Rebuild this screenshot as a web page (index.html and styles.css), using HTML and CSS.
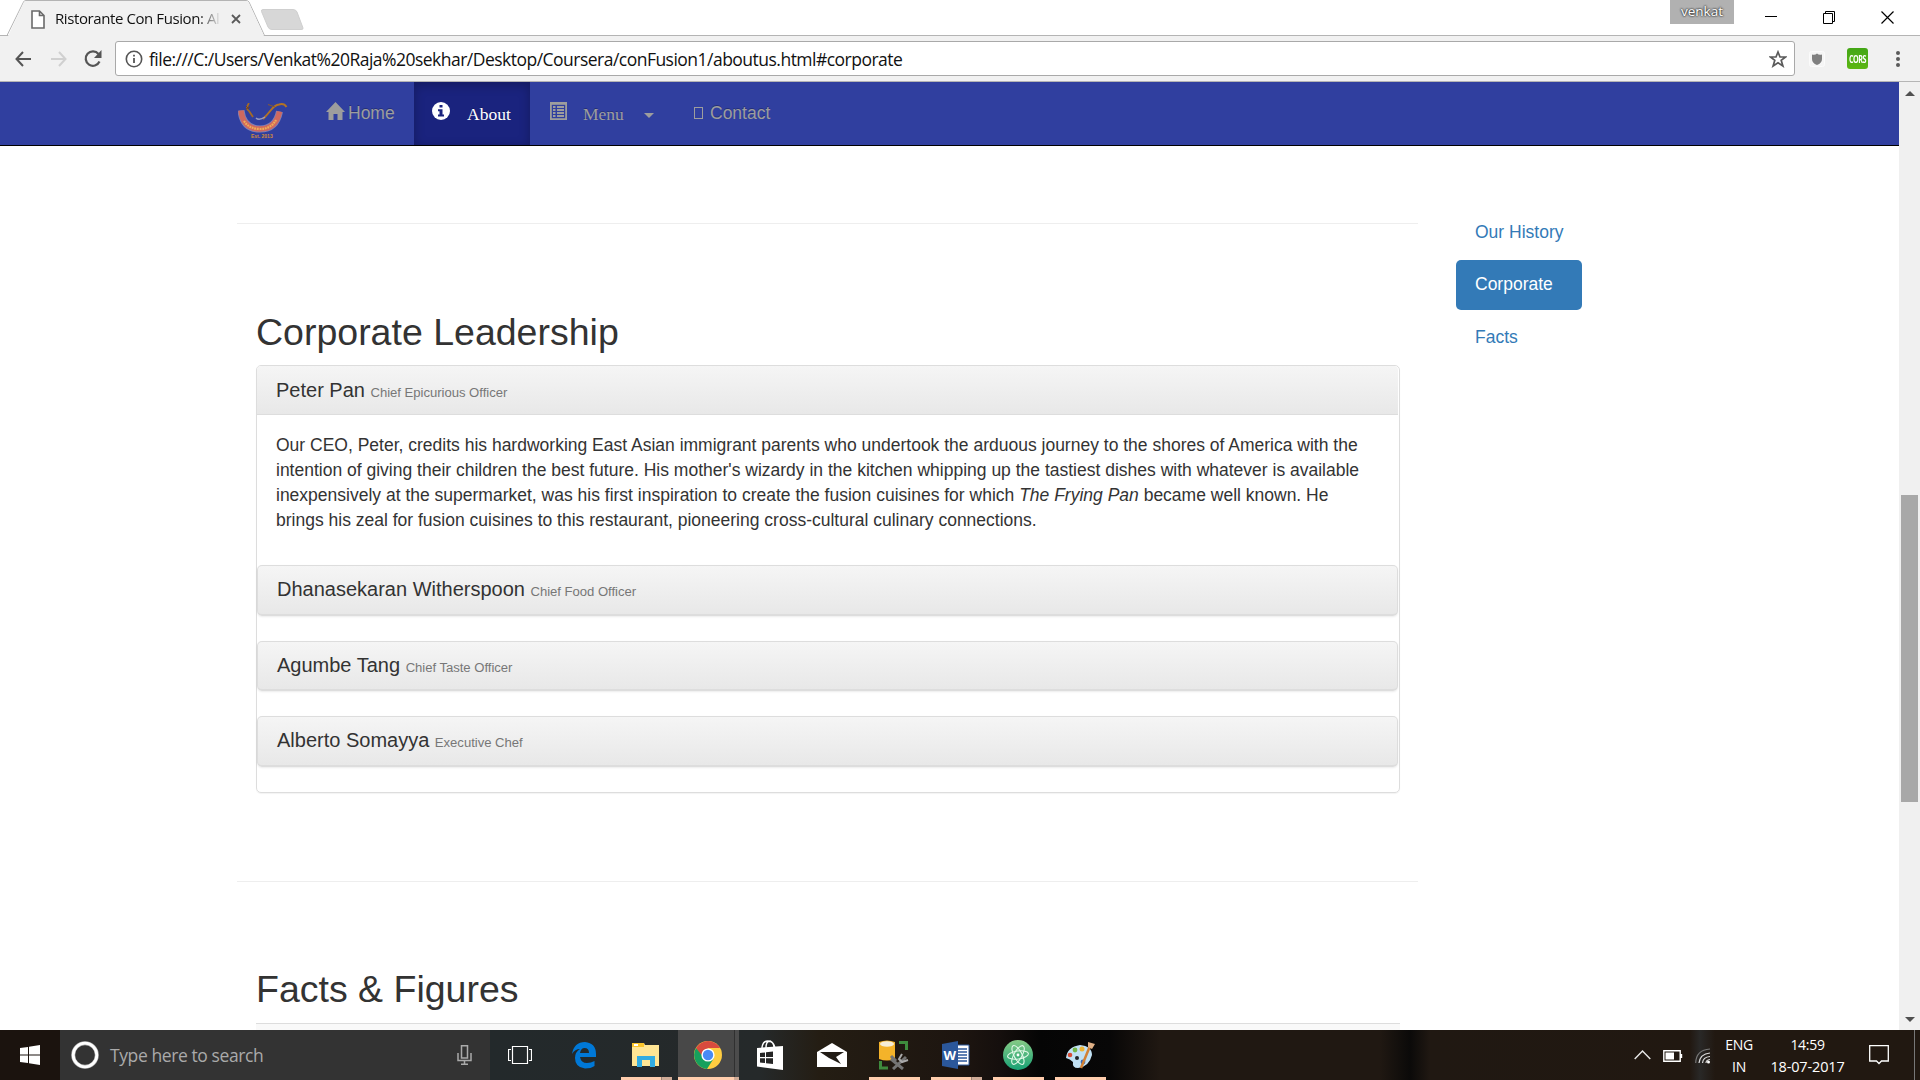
FILE: index.html
```html
<!DOCTYPE html>
<html lang="en">
<head>
<meta charset="utf-8">
<title>Ristorante Con Fusion: About Us</title>
<link rel="stylesheet" href="styles.css">
</head>
<body>
<div class="screen">
  <header class="tabstrip">
    <svg class="tab-shape" width="320" height="36" viewBox="0 0 320 36">
      <path d="M0 35.5H7L23.500 2Q24 .5 26 .5H246Q248 .5 249 2L264.500 35.500H320" fill="none" stroke="#b4b4b4"/>
      <path d="M8 36L24 2Q25 1 26 1H246Q248 1 248.500 2L264 36Z" fill="#f1f1f1"/>
      <path d="M263 9.500H293Q296 9.500 297 12L303 28Q303.500 29.500 301 29.500H272Q269 29.500 268 27L261.500 11.500Q261 9.500 263 9.500Z" fill="#d7d7d7" stroke="#cfcfcf"/>
    </svg>
    <div class="tab">
      <svg width="14" height="19" viewBox="0 0 14 19"><path d="M1 1H8.500L13 5.500V18H1ZM8.500 1V5.500H13" fill="#fff" stroke="#6a6a6a" stroke-width="1.600"/></svg>
      <span class="tab-title">Ristorante Con Fusion: Al</span>
      <svg width="10" height="10" viewBox="0 0 10 10"><path d="M1 1L9 9M9 1L1 9" stroke="#5a5a5a" stroke-width="1.800"/></svg>
    </div>
    <div class="window-tools">
      <span class="profile">venkat</span>
      <svg width="12" height="14" viewBox="0 0 12 14"><path d="M0 6.500H12" stroke="#000"/></svg>
      <svg class="restore" width="13" height="13" viewBox="0 0 13 13"><path d="M.5 2.500H9.500V12.500H.5ZM2.500 2.500V.5H11.500V10.500H9.500" fill="none" stroke="#000"/></svg>
      <svg class="close" width="13" height="13" viewBox="0 0 13 13"><path d="M.5 .5L12.500 12.500M12.500 .5L.5 12.500" stroke="#000" stroke-width="1.200"/></svg>
    </div>
  </header>

  <div class="toolbar">
    <svg class="nav-arrow" width="17" height="16" viewBox="0 0 17 16"><path d="M16 8H2M8 1L1.500 8L8 15" fill="none" stroke="#555" stroke-width="2"/></svg>
    <svg class="nav-arrow forward" width="17" height="16" viewBox="0 0 17 16"><path d="M1 8H15M9 1L15.500 8L9 15" fill="none" stroke="#d0d0d0" stroke-width="2"/></svg>
    <svg class="reload" width="18" height="18" viewBox="0 0 18 18"><path d="M15.500 11.500A7.200 7.200 0 1 1 14.500 4" fill="none" stroke="#555" stroke-width="2.200"/><path d="M17.500 0V8H10Z" fill="#555"/></svg>
    <div class="address">
      <svg width="18" height="18" viewBox="0 0 18 18"><circle cx="9" cy="9" r="7.700" fill="none" stroke="#555" stroke-width="1.600"/><path d="M9 8V13M9 4.800V6.600" stroke="#555" stroke-width="1.800"/></svg>
      <span class="url">file:///C:/Users/Venkat%20Raja%20sekhar/Desktop/Coursera/conFusion1/aboutus.html#corporate</span>
      <svg width="18" height="18" viewBox="0 0 18 18"><path d="M9 2L11 7H16.500L12.200 10.300L13.900 16L9 12.700L4.100 16L5.800 10.300L1.500 7H7Z" fill="none" stroke="#5a5a5a" stroke-width="1.700"/></svg>
    </div>
    <svg class="shield" width="16" height="16" viewBox="0 0 16 16"><rect x=".5" y=".5" width="15" height="15" rx="2" fill="#f5f5f5" stroke="#fbfbfb"/><path d="M3 3.500Q6 4.500 8 2.500Q10 4.500 13 3.500V8Q13 12 8 14Q3 12 3 8Z" fill="#808080"/></svg>
    <span class="cors"><span>CORS</span></span>
    <svg class="dots" width="4" height="18" viewBox="0 0 4 18"><circle cx="2" cy="3" r="2" fill="#5a5a5a"/><circle cx="2" cy="9" r="2" fill="#5a5a5a"/><circle cx="2" cy="15" r="2" fill="#5a5a5a"/></svg>
  </div>

  <div class="viewport">
    <div class="page">
      <nav class="navbar">
        <svg class="brand" width="50" height="37" viewBox="0 0 50 37">
          <path d="M3 7.500Q5 26 22 26Q38 26 41.500 8.500" fill="none" stroke="#7d80b8" stroke-width="7"/>
          <path d="M3 7.500Q5 26 22 26Q38 26 41.500 8.500" fill="none" stroke="#cf695f" stroke-width="5.400"/>
          <path d="M6 18Q11 26 22 26T38 17" fill="none" stroke="#f0ae55" stroke-width="2.200" stroke-dasharray="1.800 .8"/>
          <path d="M11 0Q7 6 11 8L15 14" fill="none" stroke="#a56a24" stroke-width="1.800"/>
          <path d="M8 6L12 4M8 3L11 6" stroke="#704329"/>
          <path d="M25 16Q29 12 33 7T41 1.500Q46 0 48.500 4" fill="none" stroke="#b37324" stroke-width="2"/>
          <path d="M30 1.500L37 4" stroke="#8c5a2b"/>
          <path d="M18 15Q21 18 27 14" fill="none" stroke="#999ac0" stroke-width="1.500"/>
          <text x="13" y="34.500" class="brand-date">Est. 2013</text>
        </svg>
        <a class="nav-link home"><svg width="19" height="18" viewBox="0 0 19 18"><path d="M9.500 0L19 10H16.500V18H11.500V12H7.500V18H2.500V10H0Z" fill="#9d9d9d"/></svg><span>Home</span></a>
        <a class="nav-link about"><svg width="18" height="18" viewBox="0 0 18 18"><circle cx="9" cy="9" r="9" fill="#fff"/><path d="M7.500 3H10.500V5.500H7.500ZM6 7.200H10.500V12.500H12V14.500H6V12.500H7.500V9.200H6Z" fill="#1a237e"/></svg><span>About</span></a>
        <a class="nav-link menu"><svg width="17" height="18" viewBox="0 0 17 18"><path d="M0 0H17V18H0Z" fill="#9d9d9d"/><path d="M1.800 2.800H15.200V16.200H1.800Z" fill="#303f9f"/><path d="M3 5H5.500M7 5H14M3 8H5.500M7 8H14M3 11H5.500M7 11H14M3 14H5.500M7 14H14" stroke="#9d9d9d" stroke-width="1.900"/></svg><span>Menu</span><i class="caret"></i></a>
        <a class="nav-link contact"><i class="missing-glyph"></i><span>Contact</span></a>
      </nav>
      <div class="content">
        <main>
          <section class="leadership">
            <h2>Corporate Leadership</h2>
            <div class="panel-group">
              <div class="panel-heading first">Peter Pan <small>Chief Epicurious Officer</small></div>
              <p>Our CEO, Peter, credits his hardworking East Asian immigrant parents who undertook the arduous journey to the shores of America with the<br>intention of giving their children the best future. His mother's wizardy in the kitchen whipping up the tastiest dishes with whatever is available<br>inexpensively at the supermarket, was his first inspiration to create the fusion cuisines for which <em>The Frying Pan</em> became well known. He<br>brings his zeal for fusion cuisines to this restaurant, pioneering cross-cultural culinary connections.</p>
              <div class="panel-heading nested">Dhanasekaran Witherspoon <small>Chief Food Officer</small></div>
              <div class="panel-heading nested">Agumbe Tang <small>Chief Taste Officer</small></div>
              <div class="panel-heading nested">Alberto Somayya <small>Executive Chef</small></div>
            </div>
          </section>
          <section class="facts">
            <h2>Facts &amp; Figures</h2>
            <div class="facts-box"></div>
          </section>
        </main>
        <aside>
          <a>Our History</a>
          <a class="active">Corporate</a>
          <a>Facts</a>
        </aside>
      </div>
    </div>
    <div class="scrollbar">
      <svg width="10" height="5" viewBox="0 0 10 5"><path d="M0 5L5 0L10 5Z" fill="#505050"/></svg>
      <div class="thumb"></div>
      <svg width="10" height="5" viewBox="0 0 10 5"><path d="M0 0L5 5L10 0Z" fill="#505050"/></svg>
    </div>
  </div>

  <footer class="taskbar">
    <div class="start"><svg width="20" height="20" viewBox="0 0 20 20"><path d="M0 3L8 2V9.500H0ZM9 1.800L20 0V9.500H9ZM0 10.500H8V18L0 17ZM9 10.500H20V20L9 18.200Z" fill="#fff"/></svg></div>
    <div class="search">
      <svg width="28" height="28" viewBox="0 0 28 28"><circle cx="14" cy="14" r="11.800" fill="none" stroke="#aaa" stroke-width="4"/><circle cx="14" cy="14" r="11.800" fill="none" stroke="#fff" stroke-width="2.800"/></svg>
      <span>Type here to search</span>
      <svg width="15" height="20" viewBox="0 0 15 20"><path d="M4.500 .8H10.500V13H4.500ZM1 8V15.500H14V8M7.500 15.500V19M4 19.200H11" fill="none" stroke="#aaa" stroke-width="1.500"/></svg>
    </div>
    <div class="taskview"><svg width="24" height="18" viewBox="0 0 24 18"><path d="M4.500 .5H19.500V17.500H4.500ZM3 3.500H.5V14.500H3M21 3.500H23.500V14.500H21" fill="none" stroke="#fff" stroke-width="1.200"/></svg></div>
    <div class="apps">
      <div class="app"><svg width="26" height="28" viewBox="0 0 26 28"><path d="M1 13Q3 1 14 1Q25 2 25 13V16H9Q10 22 16 22Q20 22 23.500 20V25Q20 27.500 14 27.500Q4 26.500 4 17Q4 11 9 8Q4 8 1 13ZM9 12H18Q18 7 13.500 7Q10 7 9 12Z" fill="#0078d7" fill-rule="evenodd"/></svg></div>
      <div class="app open grouped"><svg width="28" height="26" viewBox="0 0 28 26"><path d="M0 1H12L13 3H27V24H0Z" fill="#ffe594"/><path d="M0 1H12V5H0Z" fill="#fbc52c"/><path d="M2 2H6V4H2Z" fill="#fff"/><path d="M5 14H23V25H18V18H10V25H5Z" fill="#32ace2"/></svg></div>
      <div class="app open current"><svg width="28" height="28" viewBox="0 0 28 28"><circle cx="14" cy="14" r="14" fill="#ffcd41"/><path d="M2 7A14 14 0 0 1 26.200 7H14L8 17Z" fill="#d84b3e"/><path d="M2 7A14 14 0 0 0 13 28L20 17H10Z" fill="#16a05d"/><circle cx="14" cy="14" r="6.600" fill="#fff"/><circle cx="14" cy="14" r="5.200" fill="#4a8af4"/></svg></div>
      <div class="app"><svg width="26" height="30" viewBox="0 0 26 30"><path d="M0 8L26 6V30L0 26.500Z" fill="#fff"/><path d="M5 9Q5 1 11 1Q17 1 17 8M9 8Q9 1 13 1Q17 3 18 8" fill="none" stroke="#fff" stroke-width="1.400"/><path d="M3 13L8 12.500V17H3ZM9 12.300L16 11.500V17H9ZM3 18.200H8V23L3 22.500ZM9 18.200H16V24L9 23.200Z" fill="#252525"/></svg></div>
      <div class="app"><svg width="30" height="24" viewBox="0 0 30 24"><path d="M0 9L15 0L30 9V24H0Z" fill="#fff"/><path d="M3 9H27L19 14L24 21L12 15Z" fill="#211b15"/></svg></div>
      <div class="app open"><svg width="30" height="30" viewBox="0 0 30 30"><path d="M0 2Q8-1 16 2V19Q8 22 0 19Z" fill="#f4b32a"/><ellipse cx="8" cy="4" rx="7" ry="2.800" fill="#f6edd7"/><path d="M20 2.500H27.500V10M1.500 21V28H9" fill="none" stroke="#3e8b3d" stroke-width="3"/><path d="M12 19L24 29M27 17L14 29M12 16L17 21" stroke="#747474" stroke-width="3"/><path d="M23 14L20 19L23 22L29 20" fill="none" stroke="#aaa" stroke-width="2"/></svg></div>
      <div class="app open grouped"><svg width="28" height="28" viewBox="0 0 28 28"><path d="M14 4H27V24H14Z" fill="#fff" stroke="#2b579a"/><path d="M16 8H25M16 11H25M16 14H25M16 17H25M16 20H25" stroke="#2b579a" stroke-width="1.300"/><path d="M0 3L16 0V28L0 25Z" fill="#2b579a"/><text x="1.500" y="19" class="word-mark">W</text></svg></div>
      <div class="app open"><svg width="30" height="30" viewBox="0 0 30 30"><defs><linearGradient id="atom" x2="0" y2="1"><stop stop-color="#87cb86"/><stop offset="1" stop-color="#17a174"/></linearGradient></defs><circle cx="15" cy="15" r="15" fill="url(#atom)"/><g fill="none" stroke="#e2f8e8" stroke-width="1.100"><ellipse cx="15" cy="15" rx="4" ry="10.500" transform="rotate(30 15 15)"/><ellipse cx="15" cy="15" rx="4" ry="10.500" transform="rotate(-28 15 15)"/><ellipse cx="15" cy="15" rx="4" ry="10.500" transform="rotate(82 15 15)"/></g><circle cx="15" cy="15" r="1.400" fill="#fff"/></svg></div>
      <div class="app open"><svg width="30" height="28" viewBox="0 0 30 28"><path d="M1 17Q2 6 15 4Q27 5 27 14Q24 26 13 27Q7 27 8 21Q5 18 1 17Z" fill="#c1e1f4"/><circle cx="5" cy="14" r="2.300" fill="#d64b35"/><circle cx="10" cy="9" r="2.400" fill="#75b64a"/><circle cx="17" cy="8" r="2.500" fill="#efb534"/><circle cx="12" cy="17" r="2" fill="#22252b"/><circle cx="18" cy="21" r="2.400" fill="#3a69b6"/><path d="M16 27L25 5" stroke="#d28134" stroke-width="2.500"/><path d="M23 1L30 3L27 8L23 6Z" fill="#dfb086"/></svg></div>
    </div>
    <div class="tray">
      <svg class="chevron" width="17" height="10" viewBox="0 0 17 10"><path d="M.7 9L8.500 1L16.300 9" fill="none" stroke="#e8e8e8" stroke-width="1.400"/></svg>
      <svg class="battery" width="20" height="12" viewBox="0 0 20 12"><path d="M.8 .8H17.200V11.200H.8ZM18.500 4V8" fill="none" stroke="#fff" stroke-width="1.400"/><path d="M2.500 2.500H11V9.500H2.500Z" fill="#fff"/></svg>
      <svg class="wifi" width="15" height="16" viewBox="0 0 15 16"><g fill="none" stroke="#ddd" stroke-width="1.200"><path d="M.7 15Q1 2 15 1" stroke="#777"/><path d="M4 15Q5 6 15 5M7.500 15Q8 9 15 8.500M11 15Q11 12 15 11.500"/></g><circle cx="13.500" cy="14" r="1.500" fill="#fff"/></svg>
      <div class="lang"><span>ENG</span><span>IN</span></div>
      <div class="clock"><span>14:59</span><span class="date">18-07-2017</span></div>
      <svg class="action" width="20" height="20" viewBox="0 0 20 20"><path d="M.7 .7H19.300V16H12.500L10 18.500L7.500 16H.7Z" fill="none" stroke="#fff" stroke-width="1.300"/></svg>
      <i class="peek"></i>
    </div>
  </footer>
</div>
</body>
</html>
```
FILE: styles.css
```css
* { box-sizing: border-box; }
body { margin: 0; background: #fff; color: #333; font-family: "Liberation Sans", Arial, sans-serif; }
svg { display: block; flex: none; }
.screen { width: 1920px; height: 1080px; display: flex; flex-direction: column; overflow: hidden; }

/* Browser frame */
.tabstrip { position: relative; height: 36px; flex: none; display: flex; justify-content: space-between; border-bottom: 1px solid #b4b4b4; font-family: "Open Sans", "Noto Sans", sans-serif; }
.tab-shape { position: absolute; left: 0; top: 0; }
.tab { position: relative; display: flex; align-items: center; padding: 2px 0 0 31px; height: 36px; }
.tab-title { width: 166px; margin: -2px 10px 0; overflow: hidden; white-space: nowrap; font-size: 15px; letter-spacing: -0.41px; line-height: 20px; color: transparent; background: linear-gradient(90deg, #111 86%, #eee 100%); background-clip: text; -webkit-background-clip: text; }
.window-tools { display: flex; align-items: flex-start; padding-right: 26px; }
.window-tools > svg { margin-top: 10px; }
.profile { width: 64px; height: 24px; margin-right: 31px; background: #b1b1b1; color: #fff; font-size: 13.500px; line-height: 23px; text-align: center; text-shadow: 0 0 2px #222, 0 0 2px #222; }
.window-tools .restore { margin: 11px 0 0 46px; }
.window-tools .close { margin: 11px 0 0 45px; }
.toolbar { height: 46px; flex: none; display: flex; align-items: center; background: #f1f1f1; border-bottom: 1px solid #b5b5b5; padding-left: 15px; }
.forward { margin-left: 18px; }
.reload { margin-left: 17px; margin-right: 13px; }
.address { width: 1680px; height: 35px; display: flex; align-items: center; background: #fff; border: 1px solid #a9a9a9; border-radius: 3px; padding: 0 7px 0 9px; }
.url { flex: 1; margin-left: 6px; color: #111; font: 17.5px/24px "Open Sans", "Noto Sans", sans-serif; letter-spacing: -0.517px; white-space: nowrap; }
.shield { margin-left: 14px; }
.cors { width: 21px; height: 21px; margin-left: 22px; border-radius: 3px; background: linear-gradient(#43a616, #5cb713); color: #fff; font: bold 8px/21px "Open Sans", sans-serif; letter-spacing: -.5px; text-align: center; }
.cors span { display: block; transform: scale(.9, 1.3); }
.dots { margin-left: 28px; }
.viewport { flex: 1; min-height: 0; display: flex; }
.page { flex: 1; display: flex; flex-direction: column; overflow: hidden; }
.scrollbar { width: 21px; display: flex; flex-direction: column; align-items: center; justify-content: space-between; background: #f0f0f0; padding: 9px 0 8px; }
.thumb { width: 17px; height: 307px; background: #a8a8a8; margin-top: 183px; }

/* Site navigation */
.navbar { flex: none; height: 64px; display: flex; background: #303f9f; border-bottom: 1px solid #000; padding-left: 238px; font-size: 17.5px; line-height: 25px; color: #9d9d9d; }
.brand { margin: 21px 20px 0 0; }
.brand-date { font: bold 5px "Liberation Sans", sans-serif; fill: #d58b38; }
.nav-link { display: flex; padding: 18px 18px 0; text-shadow: 0 -1px 0 rgba(0,0,0,.25); }
.nav-link svg { margin-top: 2px; }
.home { width: 106px; gap: 3px; }
.home span, .contact span { padding-top: 1px; }
.about { width: 116px; gap: 17px; color: #fff; background: #1a237e; box-shadow: inset 0 3px 11px rgba(0,0,0,.25); font-family: "Liberation Serif", serif; }
.menu { width: 144px; padding-left: 20px; gap: 16px; font-family: "Liberation Serif", serif; }
.about span, .menu span { padding-top: 2px; }
.caret { margin: 13px 0 0 4px; height: 0; border: 5px solid transparent; border-top-color: #9d9d9d; border-bottom: 0; }
.contact { padding-left: 20px; gap: 7px; }
.missing-glyph { width: 9px; height: 12px; margin-top: 7px; border: 1px solid #9d9d9d; }

/* About page */
.content { flex: 1; min-height: 0; display: flex; padding-left: 237px; }
main { width: 1181px; padding-top: 77px; }
section { border-top: 1px solid #eee; padding: 88px 18px 0 19px; }
h2 { margin: 0 0 12px; font-size: 37.500px; font-weight: 400; line-height: 41px; }
.leadership { height: 658px; }
.panel-group { height: 428px; border: 1px solid #ddd; border-radius: 5px; box-shadow: 0 1px 1px rgba(0,0,0,.05); padding-right: 1px; }
.panel-heading { height: 49px; padding: 12px 19px; font-size: 20px; line-height: 24px; background: linear-gradient(#f5f5f5, #e8e8e8); border-bottom: 1px solid #ddd; }
small { font-size: 13.125px; letter-spacing: -.03px; color: #777; }
.panel-heading.first { border-radius: 4px 4px 0 0; }
.panel-heading.nested { height: 50.500px; margin-bottom: 25px; padding-top: 11px; border: 1px solid #ddd; border-bottom-width: 2px; border-radius: 5px; box-shadow: 0 1px 2px rgba(0,0,0,.08); }
.panel-group p { height: 150px; margin: 0; padding: 18px 19px 0; font-size: 17.500px; line-height: 25px; white-space: nowrap; }
.facts { padding-top: 87px; }
.facts h2 { margin-bottom: 13px; }
.facts-box { height: 30px; background: #f9f9f9; border-top: 1px solid #ddd; }
aside { width: 126px; margin: 61px 0 0 38px; display: flex; flex-direction: column; gap: 2.500px; font-size: 17.500px; line-height: 25px; color: #337ab7; }
aside a { height: 50px; border-radius: 5px; padding: 12.500px 19px; white-space: nowrap; }
aside .active { background: #337ab7; color: #fff; }

/* Desktop taskbar */
.taskbar { height: 50px; flex: none; display: flex; color: #fff; background: linear-gradient(90deg, #1b130e 0, #1b130e 60px, #23292b 490px, #25292a 760px, #241d13 820px, #1d1510 960px, #150f0d 1000px, #050505 1040px, #080707 1110px, #201812 1160px, #201812 1380px, #0b0a09 1410px, #201812 1430px, #211811 1690px, #292827 1700px, #211811 1715px, #211811 100%); font-family: "Open Sans", "Noto Sans", sans-serif; }
.start { width: 60px; padding: 15px 0 0 20px; }
.search { width: 430px; display: flex; align-items: center; background: #333; padding: 0 18px 0 11px; }
.search span { flex: 1; margin-left: 11px; color: #aaa; font-size: 17.500px; letter-spacing: -.41px; }
.taskview { width: 63px; padding: 16px 0 0 18px; }
.apps { display: flex; }
.app { width: 62px; height: 50px; position: relative; display: grid; place-items: center; }
.app.open::after { content: ""; position: absolute; height: 3px; bottom: 0; left: 6px; width: 51px; background: #ffcdad; }
.app.grouped::after { background: linear-gradient(90deg, #ffcdad 40px, #9c8376 40px 41px, #cfab97 41px); }
.app.current { background: linear-gradient(90deg, transparent 1px, #484848 1px 57px, #303030 57px 58px, #4c4c4c 58px); }
.app.current::after { left: 1px; width: 61px; background: linear-gradient(90deg, #ffcdad 56px, #cfab97 56px); }
.word-mark { font: bold 13px "Open Sans", sans-serif; fill: #fff; }
.tray { margin-left: auto; display: flex; width: 286px; font-size: 14px; letter-spacing: -.3px; line-height: 22px; }
.chevron { margin-top: 20px; }
.battery { margin: 20px 0 0 12px; }
.wifi { margin: 18px 0 0 12px; }
.lang, .clock { display: flex; flex-direction: column; align-items: center; padding-top: 4px; white-space: nowrap; }
.lang { width: 30px; margin-left: 14px; }
.clock { width: 77px; margin-left: 15px; }
.date { font-size: 14.500px; letter-spacing: -.15px; }
.action { margin: 15px 0 0 23px; }
.peek { width: 1px; height: 50px; margin-left: 25px; background: #777; }
```
